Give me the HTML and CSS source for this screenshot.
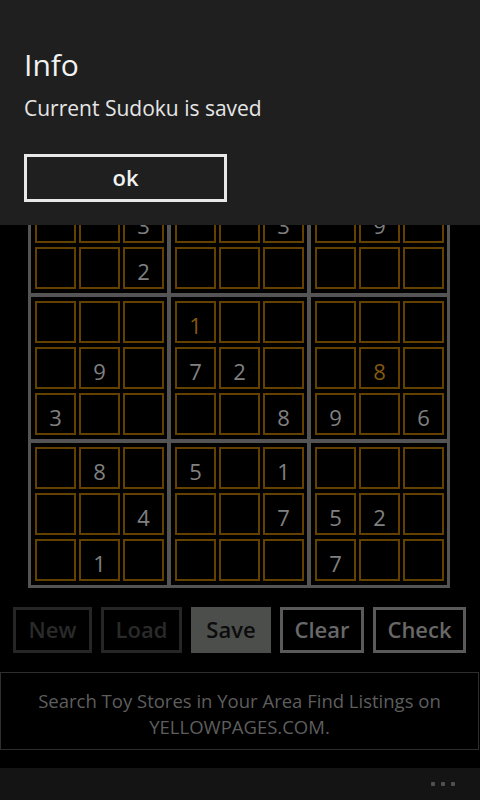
FILE: index.html
```html
<!DOCTYPE html>
<html>
<head>
<meta charset="utf-8">
<link rel="stylesheet" href="styles.css">
</head>
<body>
<div class="page">
  <div class="board-area">
    <div class="board">
      <div class="block">
        <div class="cell"></div><div class="cell"></div><div class="cell"></div>
        <div class="cell"></div><div class="cell"></div><div class="cell">3</div>
        <div class="cell"></div><div class="cell"></div><div class="cell">2</div>
      </div>
      <div class="block">
        <div class="cell"></div><div class="cell"></div><div class="cell"></div>
        <div class="cell"></div><div class="cell"></div><div class="cell">3</div>
        <div class="cell"></div><div class="cell"></div><div class="cell"></div>
      </div>
      <div class="block">
        <div class="cell"></div><div class="cell"></div><div class="cell"></div>
        <div class="cell"></div><div class="cell">9</div><div class="cell"></div>
        <div class="cell"></div><div class="cell"></div><div class="cell"></div>
      </div>
      <div class="block">
        <div class="cell"></div><div class="cell"></div><div class="cell"></div>
        <div class="cell"></div><div class="cell">9</div><div class="cell"></div>
        <div class="cell">3</div><div class="cell"></div><div class="cell"></div>
      </div>
      <div class="block">
        <div class="cell user">1</div><div class="cell"></div><div class="cell"></div>
        <div class="cell">7</div><div class="cell">2</div><div class="cell"></div>
        <div class="cell"></div><div class="cell"></div><div class="cell">8</div>
      </div>
      <div class="block">
        <div class="cell"></div><div class="cell"></div><div class="cell"></div>
        <div class="cell"></div><div class="cell user">8</div><div class="cell"></div>
        <div class="cell">9</div><div class="cell"></div><div class="cell">6</div>
      </div>
      <div class="block">
        <div class="cell"></div><div class="cell">8</div><div class="cell"></div>
        <div class="cell"></div><div class="cell"></div><div class="cell">4</div>
        <div class="cell"></div><div class="cell">1</div><div class="cell"></div>
      </div>
      <div class="block">
        <div class="cell">5</div><div class="cell"></div><div class="cell">1</div>
        <div class="cell"></div><div class="cell"></div><div class="cell">7</div>
        <div class="cell"></div><div class="cell"></div><div class="cell"></div>
      </div>
      <div class="block">
        <div class="cell"></div><div class="cell"></div><div class="cell"></div>
        <div class="cell">5</div><div class="cell">2</div><div class="cell"></div>
        <div class="cell">7</div><div class="cell"></div><div class="cell"></div>
      </div>
    </div>
  </div>

  <div class="actions">
    <div class="btn disabled w-new">New</div>
    <div class="btn disabled w-load">Load</div>
    <div class="btn filled w-save">Save</div>
    <div class="btn w-clear">Clear</div>
    <div class="btn w-check">Check</div>
  </div>

  <div class="ad">Search Toy Stores in Your Area Find Listings on<br>YELLOWPAGES.COM.</div>

  <div class="appbar">
    <div class="dots"><span></span><span></span><span></span></div>
  </div>

  <div class="dialog">
    <div class="dlg-title">Info</div>
    <div class="dlg-msg">Current Sudoku is saved</div>
    <div class="dlg-btn">ok</div>
  </div>
</div>
</body>
</html>
```

FILE: styles.css
```css
html, body {
  margin: 0;
  padding: 0;
  background: #000;
}
body {
  font-family: "Open Sans", "Noto Sans", sans-serif;
  color: #fff;
}
.page {
  position: relative;
  width: 480px;
  height: 800px;
  overflow: hidden;
  display: flex;
  flex-direction: column;
}
.board-area {
  padding: 148px 0 0 28px;
}
.board {
  width: 422px;
  box-sizing: border-box;
  border: 3px solid #545454;
  background: #545454;
  display: grid;
  grid-template-columns: repeat(3, 136px);
  grid-template-rows: repeat(3, 142px);
  gap: 4px;
}
.block {
  background: #000;
  display: grid;
  grid-template-columns: repeat(3, 41px);
  grid-template-rows: repeat(3, 42px);
  gap: 4px 3px;
  padding: 4px 3px 4px 4px;
}
.cell {
  box-sizing: border-box;
  border: 2px solid #654100;
  display: flex;
  align-items: center;
  justify-content: center;
  padding-top: 5px;
  font-size: 22px;
  color: #808080;
  line-height: 1;
}
.cell.user {
  color: #85580f;
}
.actions {
  display: flex;
  gap: 9px;
  padding: 19px 0 0 13px;
}
.btn {
  box-sizing: border-box;
  height: 46px;
  border: 3px solid #5a5a5a;
  color: #686868;
  font-size: 22px;
  font-weight: 600;
  display: flex;
  align-items: center;
  justify-content: center;
  padding-bottom: 2px;
}
.btn.disabled {
  border-color: #262626;
  color: #2a2a2a;
}
.btn.filled {
  background: #4c4e4c;
  border-color: #4c4e4c;
  color: #0c0c0c;
}
.w-new { width: 79px; }
.w-load { width: 81px; }
.w-save { width: 80px; }
.w-clear { width: 84px; }
.w-check { width: 93px; }
.ad {
  margin-top: 19px;
  height: 78px;
  width: 479px;
  box-sizing: border-box;
  border: 1px solid #2e2e2e;
  color: #5e5e5e;
  font-size: 18.5px;
  line-height: 26px;
  text-align: center;
  padding-top: 15px;
}
.appbar {
  margin-top: 18px;
  flex: 1;
  background: #141414;
  display: flex;
  justify-content: flex-end;
}
.dots {
  display: flex;
  gap: 6px;
  padding: 14px 25px 0 0;
}
.dots span {
  width: 4px;
  height: 4px;
  background: #505050;
  border-radius: 1px;
}
.dialog {
  position: absolute;
  top: 0;
  left: 0;
  width: 480px;
  height: 225px;
  background: #1f1f1f;
  box-sizing: border-box;
  padding: 45px 24px 0 24px;
}
.dlg-title {
  font-size: 30px;
  line-height: 40px;
  font-weight: 500;
  color: #f2f2f2;
}
.dlg-msg {
  margin-top: 10px;
  font-size: 21px;
  line-height: 26px;
  color: #e6e6e6;
}
.dlg-btn {
  margin-top: 33px;
  width: 203px;
  height: 48px;
  box-sizing: border-box;
  border: 3px solid #e8e8e8;
  display: flex;
  align-items: center;
  justify-content: center;
  font-size: 22px;
  font-weight: 600;
  color: #f2f2f2;
  padding-bottom: 3px;
}
```
